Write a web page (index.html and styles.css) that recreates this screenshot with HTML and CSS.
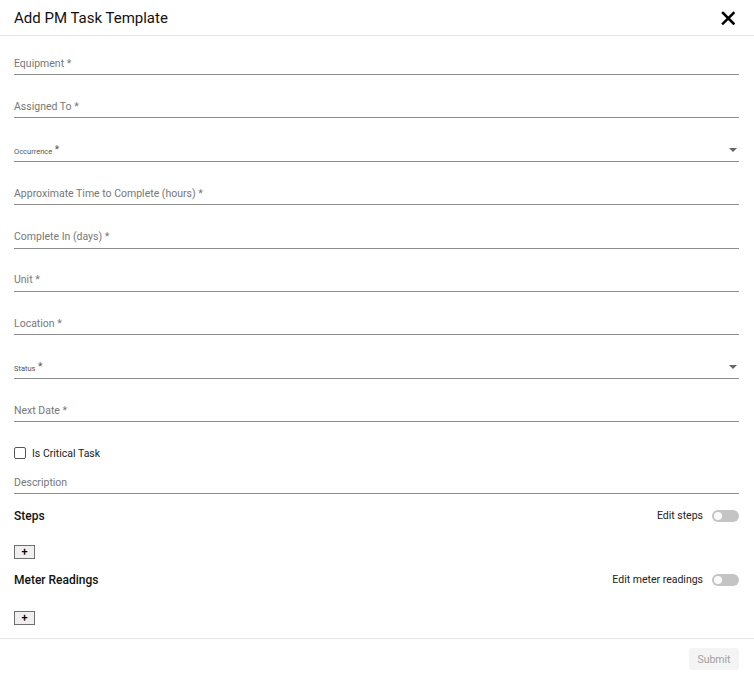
FILE: index.html
```html
<!DOCTYPE html>
<html>
<head>
<meta charset="utf-8">
<link rel="stylesheet" href="styles.css">
</head>
<body>
<div class="dialog">
  <header class="head">
    <h1 class="title">Add PM Task Template</h1>
    <svg class="close" width="14" height="14" viewBox="0 0 14 14"><path d="M2 2 L12.5 12.5 M12.5 2 L2 12.5" stroke="#000" stroke-width="2.5" stroke-linecap="square"/></svg>
  </header>
  <form class="form">
    <div class="field"><span class="label">Equipment *</span></div>
    <div class="field"><span class="label">Assigned To *</span></div>
    <div class="field select"><span class="label small">Occurrence<span class="ast"> *</span></span><span class="caret"></span></div>
    <div class="field"><span class="label">Approximate Time to Complete (hours) *</span></div>
    <div class="field"><span class="label">Complete In (days) *</span></div>
    <div class="field"><span class="label">Unit *</span></div>
    <div class="field"><span class="label">Location *</span></div>
    <div class="field select"><span class="label small">Status<span class="ast"> *</span></span><span class="caret"></span></div>
    <div class="field"><span class="label">Next Date *</span></div>
    <label class="check"><span class="box"></span><span>Is Critical Task</span></label>
    <div class="field desc"><span class="label">Description</span></div>
    <div class="section first">
      <span class="sec-title">Steps</span>
      <span class="switch-wrap">Edit steps <span class="switch"><span class="thumb"></span></span></span>
    </div>
    <div class="add-row first-add"><span class="add">+</span></div>
    <div class="section second">
      <span class="sec-title">Meter Readings</span>
      <span class="switch-wrap">Edit meter readings <span class="switch"><span class="thumb"></span></span></span>
    </div>
    <div class="add-row second-add"><span class="add">+</span></div>
  </form>
  <footer class="foot">
    <span class="submit">Submit</span>
  </footer>
</div>
</body>
</html>
```
FILE: styles.css
```css
html, body {
  margin: 0;
  padding: 0;
  background: #fff;
}
body {
  font-family: Roboto, "Liberation Sans", Arial, sans-serif;
  color: #212121;
  width: 754px;
  height: 674px;
  overflow: hidden;
}
.dialog {
  display: flex;
  flex-direction: column;
}
.head {
  height: 35px;
  border-bottom: 1px solid #e4e4e4;
  display: flex;
  align-items: center;
  justify-content: space-between;
  padding: 0 19px 0 14px;
}
.title {
  margin: 0;
  font-size: 15px;
  font-weight: 400;
  color: #111;
  letter-spacing: 0;
  line-height: 20px;
}
.close {
  display: block;
}
.form {
  padding: 19px 15px 0 14px;
  display: flex;
  flex-direction: column;
}
.field {
  height: 19px;
  border-bottom: 1px solid #8d8d8d;
  margin-top: 23.375px;
  display: flex;
  align-items: flex-start;
  justify-content: space-between;
}
.field:first-child {
  margin-top: 0;
}
.label {
  font-size: 10.5px;
  line-height: 14px;
  padding-top: 1.5px;
  color: #777;
}
.label.small {
  font-size: 7.5px;
  color: #555;
  padding-top: 2px;
}
.ast {
  font-size: 10px;
  position: relative;
  top: -1px;
}
.caret {
  width: 0;
  height: 0;
  border-left: 4.5px solid transparent;
  border-right: 4.5px solid transparent;
  border-top: 4px solid #666;
  margin-top: 6px;
  margin-right: 2px;
}
.check {
  margin-top: 24px;
  height: 14px;
  display: flex;
  align-items: center;
  gap: 6px;
  font-size: 10.5px;
  color: #222;
}
.box {
  width: 10px;
  height: 10px;
  border: 1px solid #555;
  border-radius: 2px;
  background: #fff;
}
.field.desc {
  margin-top: 14px;
}
.section {
  height: 20px;
  display: flex;
  align-items: center;
  justify-content: space-between;
}
.section.first {
  margin-top: 12px;
}
.section.second {
  margin-top: 11px;
}
.sec-title {
  font-size: 12px;
  font-weight: 500;
  color: #111;
}
.switch-wrap {
  display: flex;
  align-items: center;
  gap: 9px;
  font-size: 10.5px;
  color: #222;
  margin-top: -1px;
}
.switch {
  width: 27px;
  height: 12px;
  border-radius: 6px;
  background: #c4c4c4;
  display: flex;
  align-items: center;
  padding-left: 2px;
  box-sizing: border-box;
  margin-top: 1px;
}
.thumb {
  width: 8px;
  height: 8px;
  border-radius: 50%;
  background: #fafafa;
}
.add-row {
  display: flex;
}
.first-add {
  margin-top: 19px;
}
.second-add {
  margin-top: 21px;
}
.add {
  width: 19px;
  height: 12px;
  border: 1px solid #6f6f6f;
  background: #efefef;
  font-size: 11px;
  line-height: 11px;
  text-align: center;
  color: #000;
  font-weight: 500;
}
.foot {
  margin-top: 13px;
  border-top: 1px solid #e4e4e4;
  display: flex;
  justify-content: flex-end;
  padding: 9px 15px 0 0;
}
.submit {
  width: 50px;
  height: 22px;
  border-radius: 3px;
  background: #f4f4f4;
  color: #a0a0a0;
  font-size: 10.5px;
  display: flex;
  align-items: center;
  justify-content: center;
}
```
